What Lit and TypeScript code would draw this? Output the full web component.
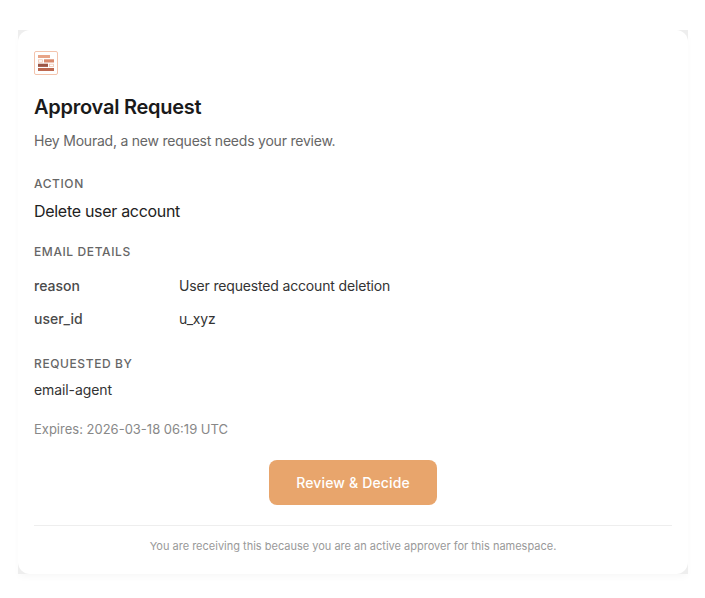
import { LitElement, html, css, svg } from "lit";
import { customElement } from "lit/decorators.js";

const logo = svg`
  <svg class="logo" width="24" height="24" viewBox="0 0 24 24">
    <rect x="0.5" y="0.5" width="23" height="23" rx="1.5" fill="#fff" stroke="#f3c4ad"/>
    <rect x="4" y="4" width="12" height="3" fill="#e8a487"/>
    <rect x="4.5" y="8.8" width="4" height="2.4" fill="#fff" stroke="#f0c4b0" stroke-width="0.8"/>
    <rect x="10" y="8.3" width="10" height="3.2" fill="#d9886a"/>
    <rect x="4" y="12.7" width="10" height="3.2" fill="#9c5545"/>
    <rect x="15.5" y="13.2" width="4" height="2.4" fill="#fff" stroke="#f0c4b0" stroke-width="0.8"/>
    <rect x="4" y="17" width="16" height="3" fill="#bd6850"/>
  </svg>
`;

@customElement("app-root")
export class AppRoot extends LitElement {
  static styles = css`
    :host {
      display: block;
      height: 598px;
      box-sizing: border-box;
      padding: 30px 17px 0 18px;
      background: #fff;
      font-family: Inter, "Liberation Sans", sans-serif;
      color: #1a1a1a;
    }
    .frame {
      background: #eeeeee;
      box-shadow: 0 4px 8px -2px rgba(0, 0, 0, 0.04);
    }
    .card {
      height: 544px;
      box-sizing: border-box;
      padding: 21px 16px 0;
      background: #fff;
      border-radius: 12px;
    }
    .logo {
      display: block;
    }
    h1 {
      margin: 20px 0 0;
      font-size: 20px;
      line-height: 24px;
      font-weight: 600;
      letter-spacing: -0.25px;
    }
    .intro {
      margin: 12px 0 0;
      font-size: 14px;
      line-height: 20px;
      letter-spacing: -0.22px;
      color: #666;
    }
    .label {
      margin: 0;
      font-size: 12px;
      line-height: 16px;
      font-weight: 500;
      letter-spacing: 0.6px;
      color: #666;
    }
    .action-label {
      margin-top: 25px;
    }
    .action {
      margin: 9px 0 0;
      font-size: 16px;
      line-height: 20px;
      letter-spacing: -0.3px;
      color: #222;
    }
    .details-label {
      margin-top: 23px;
    }
    .details {
      margin-top: 9px;
      display: grid;
      grid-template-columns: 145px 1fr;
      grid-auto-rows: 33px;
      align-items: center;
      font-size: 14px;
      letter-spacing: -0.16px;
      color: #333;
    }
    .key {
      font-weight: 500;
      color: #4a4a4a;
      letter-spacing: 0;
    }
    .requested-label {
      margin-top: 21px;
    }
    .agent {
      margin: 8px 0 0;
      font-size: 14px;
      line-height: 20px;
      letter-spacing: -0.1px;
      color: #333;
    }
    .expires {
      margin: 20px 0 0;
      font-size: 13px;
      line-height: 18px;
      color: #888;
    }
    .actions {
      display: flex;
      justify-content: center;
      margin-top: 22px;
    }
    .button {
      width: 168px;
      height: 45px;
      display: flex;
      align-items: center;
      justify-content: center;
      border-radius: 8px;
      background: #e8a56c;
      color: #fff;
      font-size: 14px;
      font-weight: 500;
      letter-spacing: 0.15px;
      text-decoration: none;
    }
    .footer {
      margin-top: 20px;
      padding-top: 13px;
      border-top: 1px solid #eee;
      text-align: center;
      font-size: 11px;
      line-height: 14px;
      color: #999;
    }
  `;

  render() {
    return html`
      <div class="frame">
        <div class="card">
          ${logo}
          <h1>Approval Request</h1>
          <p class="intro">Hey Mourad, a new request needs your review.</p>
          <p class="label action-label">ACTION</p>
          <p class="action">Delete user account</p>
          <p class="label details-label">EMAIL DETAILS</p>
          <div class="details">
            <span class="key">reason</span>
            <span>User requested account deletion</span>
            <span class="key">user_id</span>
            <span>u_xyz</span>
          </div>
          <p class="label requested-label">REQUESTED BY</p>
          <p class="agent">email-agent</p>
          <p class="expires">Expires: 2026-03-18 06:19 UTC</p>
          <div class="actions"><a class="button" href="#">Review &amp; Decide</a></div>
          <div class="footer">You are receiving this because you are an active approver for this namespace.</div>
        </div>
      </div>
    `;
  }
}
